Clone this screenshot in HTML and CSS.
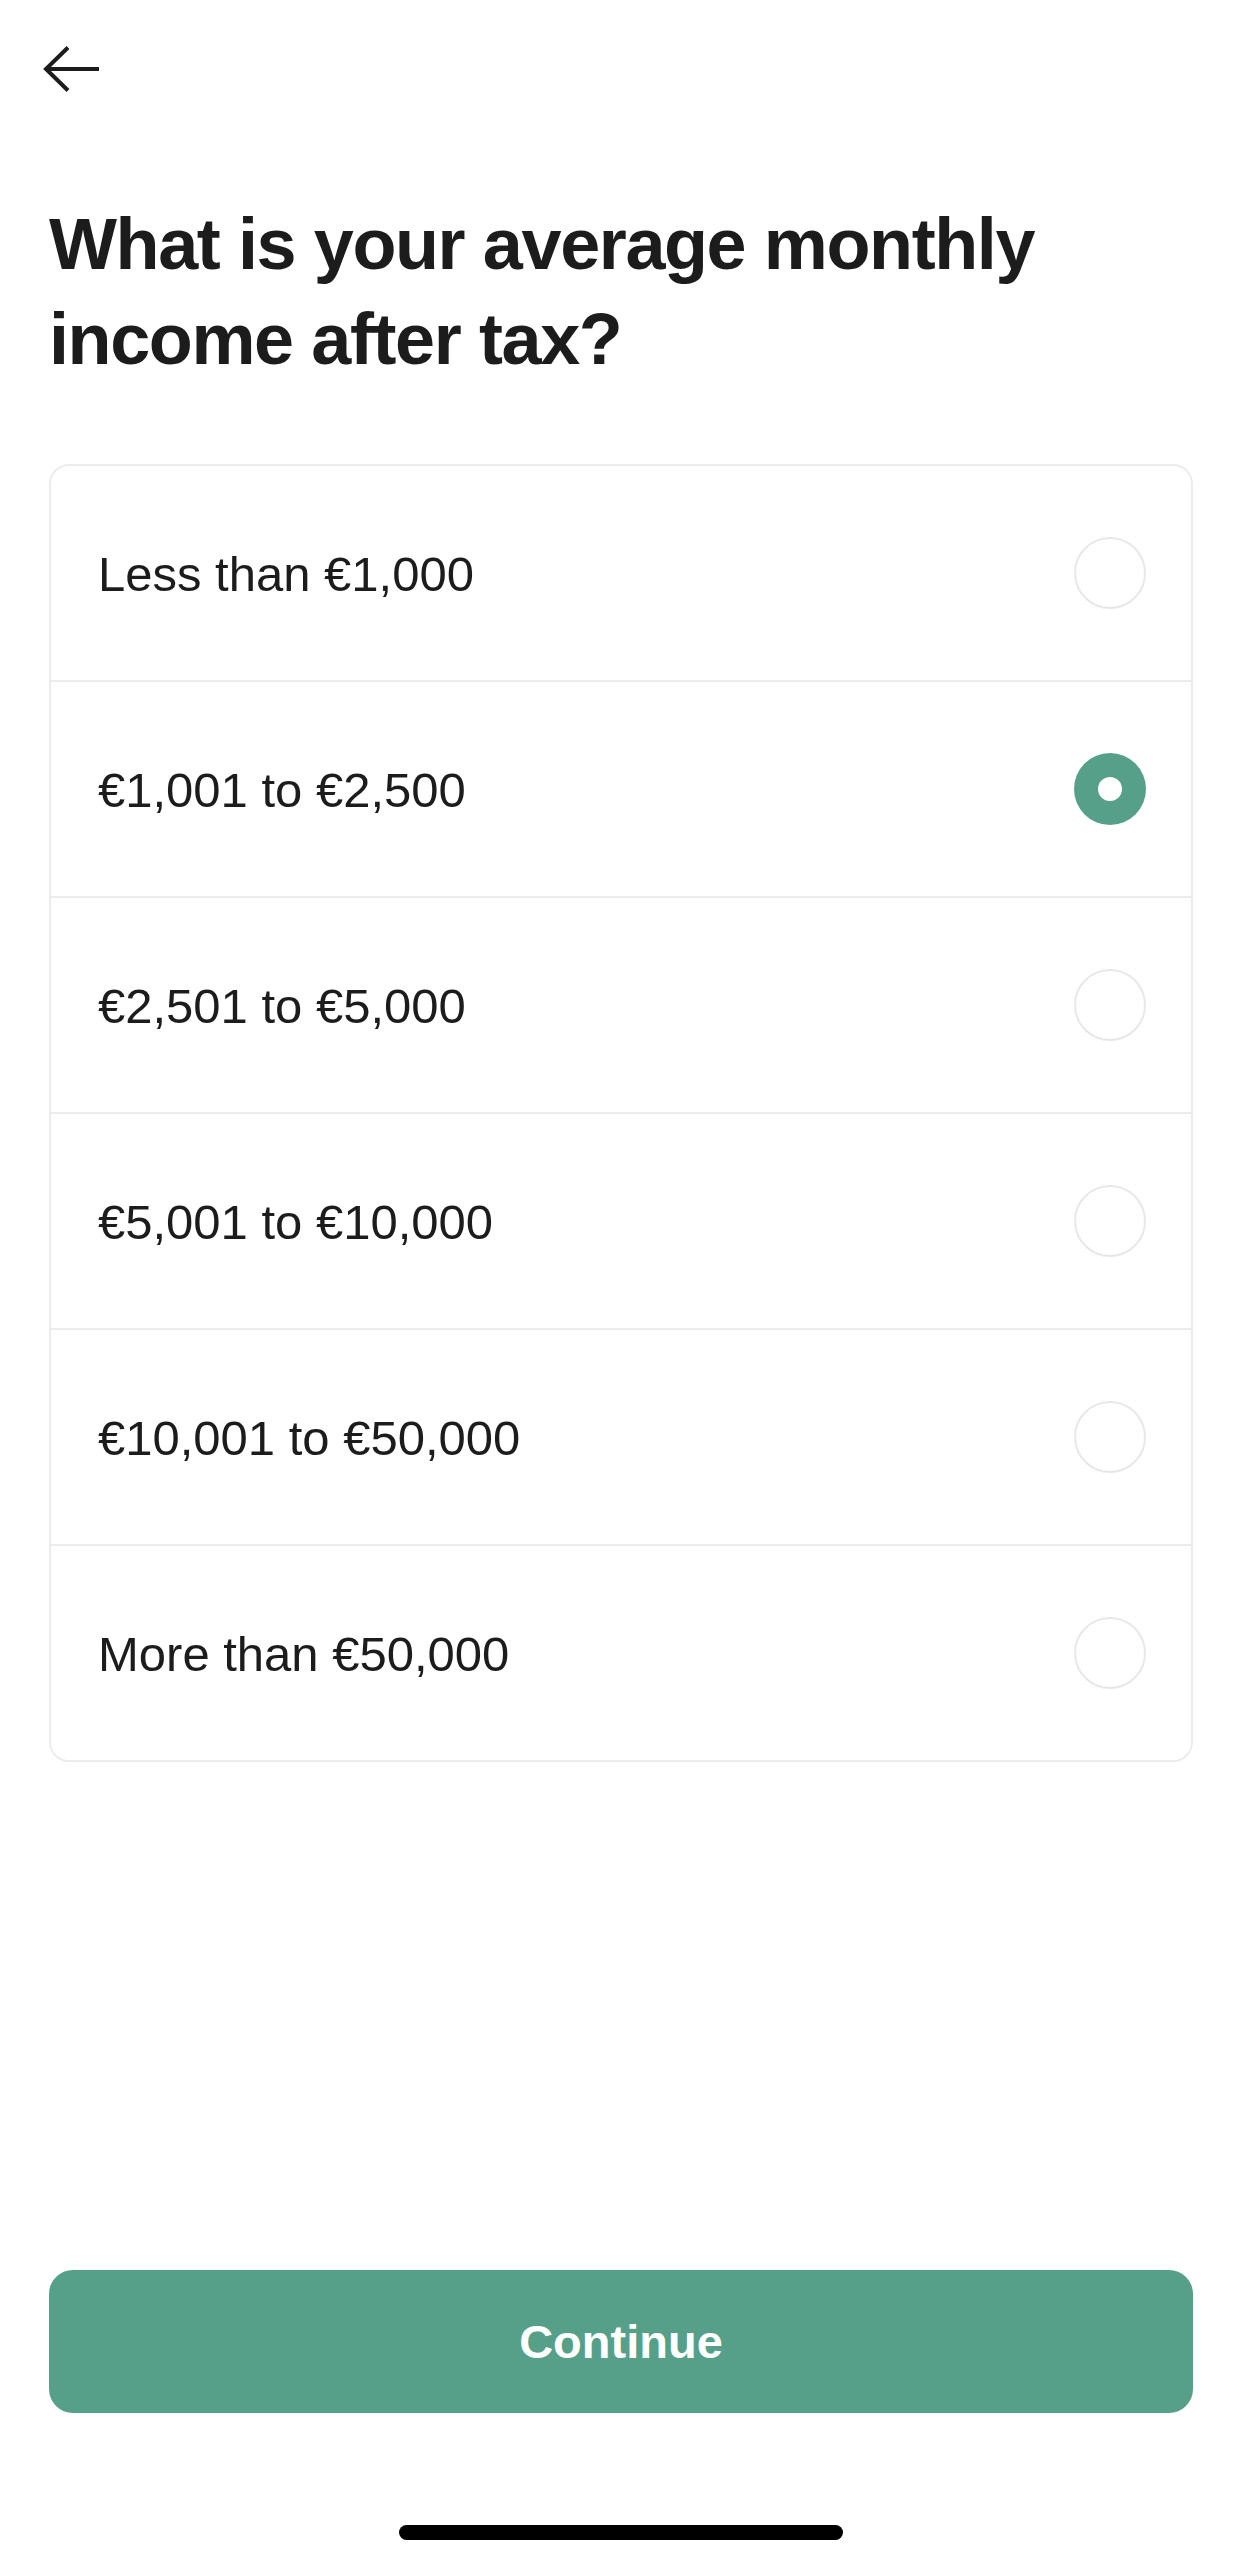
FILE: index.html
```html
<!DOCTYPE html>
<html lang="en">
<head>
<meta charset="utf-8">
<title>Monthly income</title>
<link rel="stylesheet" href="styles.css">
</head>
<body>
<div class="screen">
  <div class="topbar">
    <svg class="back" width="60" height="48" viewBox="0 0 60 48" aria-label="Back">
      <path d="M2.5 24 H56 M25 2.5 L3 24 L25 45.5" fill="none" stroke="#1c1c1c" stroke-width="4" stroke-linecap="butt" stroke-linejoin="miter"/>
    </svg>
  </div>
  <h1 class="title">What is your average monthly income after tax?</h1>
  <div class="options">
    <div class="option"><span class="label">Less than €1,000</span><span class="radio"></span></div>
    <div class="option"><span class="label">€1,001 to €2,500</span><span class="radio selected"></span></div>
    <div class="option"><span class="label">€2,501 to €5,000</span><span class="radio"></span></div>
    <div class="option"><span class="label">€5,001 to €10,000</span><span class="radio"></span></div>
    <div class="option"><span class="label">€10,001 to €50,000</span><span class="radio"></span></div>
    <div class="option"><span class="label">More than €50,000</span><span class="radio"></span></div>
  </div>
  <div class="spacer"></div>
  <button class="continue">Continue</button>
  <div class="home-indicator"></div>
</div>
</body>
</html>
```
FILE: styles.css
```css
* { box-sizing: border-box; }
html, body { margin: 0; padding: 0; background: #ffffff; }
body { font-family: "Liberation Sans", Arial, sans-serif; color: #1c1c1c; }

.screen {
  width: 1242px;
  height: 2560px;
  display: flex;
  flex-direction: column;
  padding: 0 49px;
}

.topbar {
  padding-top: 45px;
  height: 93px;
  margin-left: -6px;
}
.back { display: block; }

.title {
  margin: 104px 0 0 0;
  font-size: 72px;
  line-height: 95px;
  font-weight: 700;
  letter-spacing: -1.4px;
  color: #1c1c1c;
}

.options {
  margin-top: 77px;
  border: 2px solid #ececec;
  border-radius: 20px;
  display: flex;
  flex-direction: column;
}

.option {
  height: 214px;
  display: flex;
  align-items: center;
  justify-content: space-between;
  padding: 0 45px 0 47px;
}
.option + .option {
  height: 216px;
  border-top: 2px solid #ececec;
}

.label {
  font-size: 49px;
  line-height: 1;
  letter-spacing: 0;
  color: #1c1c1c;
  padding-top: 3px;
}

.radio {
  width: 72px;
  height: 72px;
  border-radius: 50%;
  border: 2.5px solid #e8e8e8;
  flex: none;
  display: flex;
  align-items: center;
  justify-content: center;
}
.radio.selected {
  border: none;
  background: #56a08a;
}
.radio.selected::after {
  content: "";
  width: 24px;
  height: 24px;
  border-radius: 50%;
  background: #ffffff;
}

.spacer { flex: 1; }

.continue {
  height: 143px;
  width: 100%;
  border: none;
  border-radius: 24px;
  background: #56a08a;
  color: #ffffff;
  font-family: "Liberation Sans", Arial, sans-serif;
  font-size: 47px;
  font-weight: 700;
  padding: 0;
}

.home-indicator {
  width: 444px;
  height: 15px;
  border-radius: 8px;
  background: #000000;
  align-self: center;
  margin: 112px 0 20px 0;
}
```
